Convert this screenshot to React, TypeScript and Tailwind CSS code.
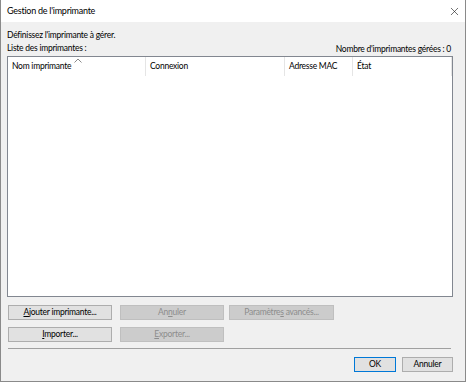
import { X } from 'lucide-react'

function Btn({ label, u, disabled, primary, w }: { label: string; u?: number; disabled?: boolean; primary?: boolean; w: string }) {
  const chars = u === undefined ? label : (
    <>
      {label.slice(0, u)}
      <span className="underline underline-offset-1">{label[u]}</span>
      {label.slice(u + 1)}
    </>
  )
  return (
    <div
      className={`flex h-[15px] items-center justify-center border text-[8.5px] ${w} ${
        disabled
          ? 'border-[#bfbfbf] bg-[#cccccc] text-[#8d8d8d]'
          : primary
            ? 'border-[#0078d7] bg-[#e1e1e1] text-black'
            : 'border-[#adadad] bg-[#e1e1e1] text-black'
      }`}
    >
      <span>{chars}</span>
    </div>
  )
}

const COLS = [
  { label: 'Nom imprimante', w: 'w-[138px]' },
  { label: 'Connexion', w: 'w-[139px]' },
  { label: 'Adresse MAC', w: 'w-[68px]' },
  { label: 'État', w: 'flex-1' },
]

export default function App() {
  return (
    <div
      className="flex h-[382px] w-[466px] flex-col border-x border-b border-[#8a8a8a] bg-[#f0f0f0] text-[8.5px] tracking-[-0.25px] text-black"
      style={{ fontFamily: 'Lato, "Noto Sans", sans-serif' }}
    >
      <div className="flex h-[22px] items-center justify-between bg-white pl-[6px] pr-[4px]">
        <span className="text-[9px]">Gestion de l'imprimante</span>
        <X size={13} strokeWidth={1.1} className="text-[#111]" />
      </div>
      <div className="flex flex-1 flex-col pl-[6px] pr-[12px]">
        <div className="mt-[7px] leading-[12px]">Définissez l'imprimante à gérer.</div>
        <div className="mt-[1px] flex items-end justify-between leading-[12px]">
          <span>Liste des imprimantes :</span>
          <span className="mr-[2px] translate-y-[1px]">Nombre d'imprimantes gérées : 0</span>
        </div>
        <div className="mt-[2px] flex h-[241px] flex-col border border-[#828790] bg-white">
          <div className="relative flex h-[19px]">
            {COLS.map((c) => (
              <div key={c.label} className={`flex items-center border-r border-[#e5e5e5] pl-[4px] ${c.w}`}>
                {c.label}
              </div>
            ))}
            <svg className="absolute left-[66px] top-[1px]" width="8" height="5" viewBox="0 0 8 5">
              <path d="M0.5 4.5 L4 1 L7.5 4.5" fill="none" stroke="#8a8a8a" strokeWidth="1" />
            </svg>
          </div>
        </div>
        <div className="mt-[8px] flex gap-[8px] pl-[1px]">
          <Btn label="Ajouter imprimante..." u={0} w="w-[104px]" />
          <Btn label="Annuler" u={2} disabled w="w-[104px]" />
          <div className="-ml-[3px]">
            <Btn label="Paramètres avancés..." u={9} disabled w="w-[105px]" />
          </div>
        </div>
        <div className="mt-[7px] flex gap-[8px] pl-[1px]">
          <Btn label="Importer..." u={0} w="w-[104px]" />
          <Btn label="Exporter..." u={0} disabled w="w-[104px]" />
        </div>
        <div className="ml-[1px] mr-[2px] mt-[6px] h-[1px] bg-[#a0a0a0]" />
        <div className="mt-[8px] flex justify-end gap-[6px]">
          <Btn label="OK" primary w="w-[42px]" />
          <Btn label="Annuler" w="w-[51px]" />
        </div>
      </div>
    </div>
  )
}
